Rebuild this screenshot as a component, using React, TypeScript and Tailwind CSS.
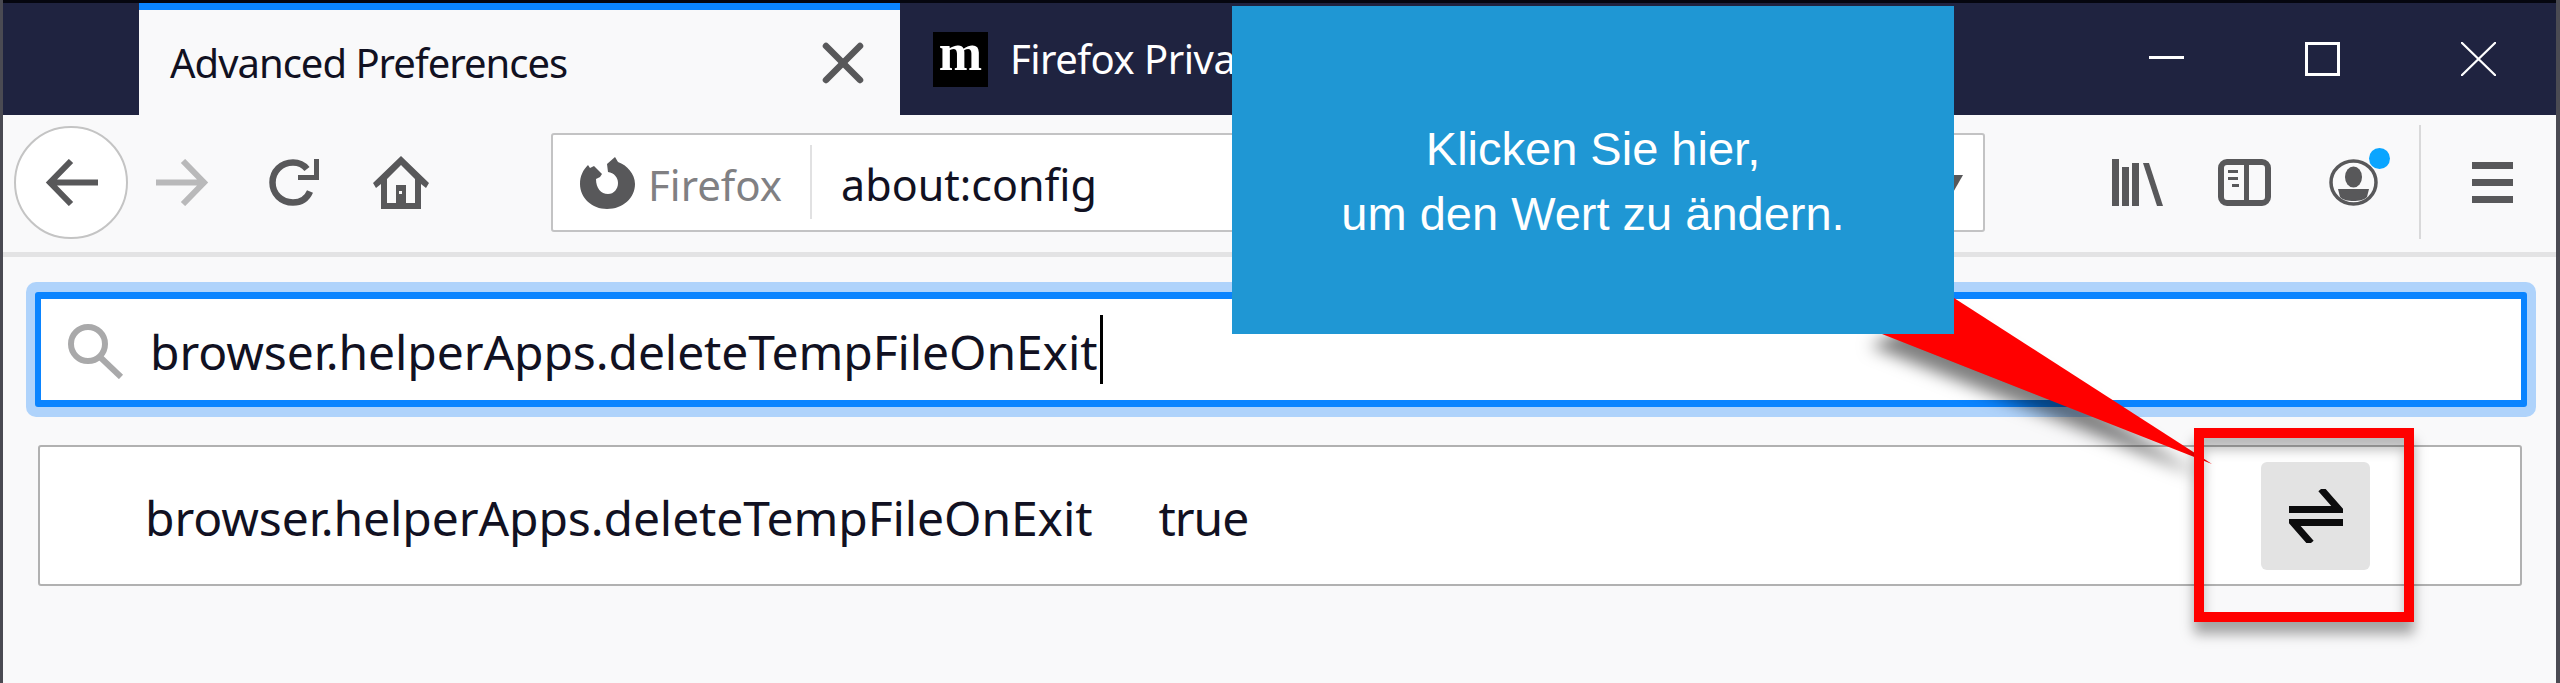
import { X } from "lucide-react";

const seg = "font-['Noto_Sans','Open_Sans',sans-serif]";

function ToolbarIcons() {
  return (
    <div className="flex items-center h-full text-[#58585a]">
      {/* library */}
      <svg className="ml-[127px]" width="51" height="47" viewBox="0 0 51 47" fill="currentColor">
        <rect x="0" y="0" width="7" height="47" />
        <rect x="10" y="8" width="7" height="39" />
        <rect x="20" y="4" width="7" height="43" />
        <path d="M31 4h6l14 43h-6z" />
      </svg>
      {/* sidebar */}
      <svg className="ml-[55px]" width="53" height="47" viewBox="0 0 53 47" fill="none">
        <rect x="3" y="3" width="47" height="41" rx="6" stroke="currentColor" strokeWidth="6" />
        <rect x="26" y="3" width="5" height="41" fill="currentColor" />
        <rect x="10" y="11" width="10" height="3" fill="currentColor" />
        <rect x="10" y="18" width="10" height="3" fill="currentColor" />
        <rect x="14" y="25" width="7" height="3" fill="currentColor" />
      </svg>
      {/* account */}
      <div className="relative ml-[58px] w-[49px] h-[47px]">
        <svg width="49" height="47" viewBox="0 0 49 47" fill="currentColor">
          <ellipse cx="24.5" cy="23.5" rx="22.5" ry="21.5" fill="none" stroke="currentColor" strokeWidth="3.5" />
          <ellipse cx="24.5" cy="18" rx="8.5" ry="10.5" />
          <path d="M9 30h31l-2 8c-3 3-8 4-13.500 4S14 41 11 38z" />
        </svg>
        <div className="absolute left-[40px] top-[-11px] w-[21px] h-[21px] rounded-full bg-[#0aa5ff]" />
      </div>
      <div className="ml-[41px] w-[2px] h-[114px] bg-[#d9d9da]" />
      <div className="ml-[51px] w-[41px] flex flex-col gap-[10px]">
        <div className="h-[7px] bg-current" />
        <div className="h-[7px] bg-current" />
        <div className="h-[7px] bg-current" />
      </div>
    </div>
  );
}

export default function App() {
  return (
    <div className={`relative w-[2560px] h-[683px] overflow-hidden bg-[#f9f9fa] ${seg}`}>
      <div className="h-[3px] bg-[#05060f]" />

      {/* tab strip */}
      <div className="flex h-[112px] bg-[#1f2340] pl-[139px]">
        <div className="w-[761px] bg-[#f9f9fa] border-t-[7px] border-[#0a84ff] flex items-center pl-[31px] pr-[23px] justify-between">
          <span className="text-[40px] leading-none text-[#111122] tracking-[-1px]">Advanced Preferences</span>
          <X className="text-[#58585a]" size={68} strokeWidth={2.3} />
        </div>
        <div className="flex items-center pl-[33px] shrink-0">
          <div className="w-[55px] h-[55px] bg-black text-white flex items-center justify-center shrink-0 font-['Liberation_Serif',serif] font-bold text-[52px] leading-none pb-[12px]">m</div>
          <span className="ml-[22px] text-[40px] leading-none text-white whitespace-nowrap tracking-[-0.5px]">Firefox Privacy Notice</span>
        </div>
        <div className="ml-auto flex items-center gap-[121px] pr-[64px]">
          <div className="w-[35px] h-[3px] bg-white mb-[4px]" />
          <div className="w-[35px] h-[34px] border-[3px] border-white" />
          <svg width="35" height="34" viewBox="0 0 35 34" stroke="white" strokeWidth="2.200">
            <path d="M0 0l35 34M35 0L0 34" />
          </svg>
        </div>
      </div>

      {/* toolbar */}
      <div className="flex items-center h-[142px] border-b-[5px] border-[#e3e3e4] pl-[14px] pb-[3px] text-[#58585a]">
        <div className="w-[114px] h-[113px] rounded-full bg-white border-2 border-[#c4c4c4] flex items-center justify-center shrink-0">
          <svg width="53" height="47" viewBox="0 0 53 47" fill="none" stroke="currentColor" strokeWidth="6"><path d="M53 23.500H6M26 2L5 23.500 26 45" /></svg>
        </div>
        <svg className="ml-[28px] shrink-0 text-[#b9b9ba]" width="54" height="47" viewBox="0 0 54 47" fill="none" stroke="currentColor" strokeWidth="6"><path d="M0 23.500h47M27 2l21 21.500L27 45" /></svg>
        <svg className="ml-[59px] shrink-0" width="50" height="47" viewBox="0 0 50 47" fill="none" stroke="currentColor" strokeWidth="6.500">
          <path d="M38 10C34 5 29 3.500 24 3.500 12 3.500 3.500 12.500 3.500 23.500S12 43.500 24 43.500c8 0 14-4 17-11" />
          <path d="M50 0v21H29v-5h16V0z" fill="currentColor" stroke="none" />
        </svg>
        <svg className="ml-[54px] shrink-0" width="56" height="53" viewBox="0 0 56 53" fill="currentColor">
          <path d="M28 0L56 27l-3 5-5-4v25H8V28l-5 4-3-5zM14 23v24h9V29h10v18h9V23L28 9z" />
          <rect x="26" y="35" width="3" height="3" fill="#f9f9fa" />
        </svg>

        {/* url bar */}
        <div className="ml-[122px] w-[1434px] h-[99px] shrink-0 bg-white border-2 border-[#c3c3c4] rounded-[3px] flex items-center">
          <svg className="ml-[27px] shrink-0" width="55" height="53" viewBox="0 0 55 53" fill="#58585a">
            <path d="M35 1l3 5c9 3 17 12 17 22 0 14-12 25-28 25C12 53 0 42 0 28c0-8 3-14 8-19l2 3 4-2 4 4 4 4-2 3-4 2c0 9 5 15 12 15 6 0 10-5 10-11 0-6-4-10-10-11l-1-8z" />
          </svg>
          <span className="ml-[13px] mt-[5px] text-[42px] leading-none text-[#808083]">Firefox</span>
          <div className="ml-[28px] w-[2px] h-[74px] bg-[#e1e1e2]" />
          <span className="ml-[29px] mt-[5px] text-[43px] leading-none text-[#111122]">about:config</span>
          <svg className="ml-auto mr-[20px]" width="20" height="27" viewBox="0 0 20 27" fill="#58585a"><path d="M0 6h20L8 27z" /></svg>
        </div>
        <ToolbarIcons />
      </div>

      {/* search box */}
      <div className="ml-[26px] mr-[24px] mt-[25px] h-[135px] rounded-[10px] bg-[#afd3fb] px-[9px] py-[10px]">
        <div className="h-full bg-white border-y-[7px] border-x-[6px] border-[#0a84ff] rounded-[3px] flex items-center pl-[27px]">
          <svg className="shrink-0 mt-[3px]" width="56" height="55" viewBox="0 0 56 55" fill="none" stroke="#a9a9aa" strokeWidth="6">
            <ellipse cx="20" cy="20" rx="17" ry="17" />
            <path d="M32 33l21 20" />
          </svg>
          <span className="ml-[26px] mt-[5px] text-[48px] leading-none text-[#111122] tracking-[-0.1px]">browser.helperApps.deleteTempFileOnExit</span>
          <div className="ml-[3px] w-[3px] h-[69px] bg-black" />
        </div>
      </div>

      {/* result row */}
      <div className="mx-[38px] mt-[28px] h-[141px] bg-white border-2 border-[#b1b1b1] rounded-[3px] flex items-center pl-[105px] pr-[150px]">
        <span className="mt-[5px] text-[48px] leading-none text-[#111122] tracking-[-0.1px]">browser.helperApps.deleteTempFileOnExit</span>
        <span className="ml-[66px] mt-[5px] text-[48px] leading-none text-[#111122] tracking-[-1px]">true</span>
        <button className="ml-auto w-[109px] h-[108px] rounded-[6px] bg-[#e3e3e3] flex items-center justify-center">
          <svg width="54" height="54" viewBox="0 0 54 54" fill="none" stroke="#0c0c0d" strokeWidth="7">
            <path d="M0 20.500h50L32 0" />
            <path d="M54 33.500H4L22 54" />
          </svg>
        </button>
      </div>

      {/* callout annotation */}
      <svg className="absolute left-[1800px] top-[260px] drop-shadow-[-12px_12px_8px_rgba(0,0,0,0.5)]" width="440" height="230" viewBox="0 0 440 230">
        <polygon points="154,38 82,74 412,204" fill="#ff0000" />
      </svg>
      <div className="absolute left-[1232px] top-[6px] w-[722px] h-[328px] bg-[#1f97d4] flex flex-col items-center justify-center text-center text-white font-['Liberation_Sans',Arial,sans-serif] text-[47px] leading-[65px] pt-[22px]">
        <div>Klicken Sie hier,</div>
        <div>um den Wert zu ändern.</div>
      </div>
      <div className="absolute left-[2194px] top-[428px] w-[220px] h-[194px] border-[10px] border-[#ff0000] shadow-[0_12px_12px_rgba(0,0,0,0.35),inset_0_12px_12px_rgba(0,0,0,0.25)]" />

      {/* window edges */}
      <div className="absolute left-0 top-0 bottom-0 w-[3px] bg-[#4a4a52]" />
      <div className="absolute right-0 top-0 bottom-0 w-[4px] bg-[#4a4a52]" />
    </div>
  );
}
